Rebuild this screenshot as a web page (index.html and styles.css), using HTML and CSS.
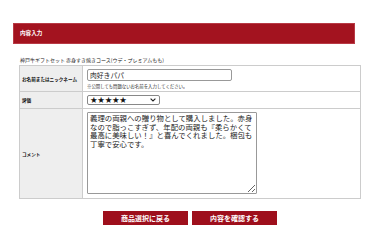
FILE: index.html
```html
<!DOCTYPE html>
<html lang="ja">
<head>
<meta charset="utf-8">
<link rel="stylesheet" href="styles.css">
</head>
<body>
<div class="header">内容入力</div>
<div class="title">神戸牛ギフトセット 赤身すき焼きコース(ウデ・プレミアムもも)</div>
<table class="form">
  <tr class="row-name">
    <th>お名前またはニックネーム</th>
    <td>
      <input class="name-input" type="text" value="肉好きパパ">
      <div class="note">※公開しても問題ないお名前を入力してください。</div>
    </td>
  </tr>
  <tr class="row-rating">
    <th>評価</th>
    <td>
      <div class="select"><span class="stars">★★★★★</span><svg class="chev" width="6" height="4" viewBox="0 0 6 4"><path d="M0.6 0.6 L3 3 L5.4 0.6" fill="none" stroke="#222" stroke-width="1.1"/></svg></div>
    </td>
  </tr>
  <tr class="row-comment">
    <th>コメント</th>
    <td>
      <textarea class="comment">義理の両親への贈り物として購入しました。赤身なので脂っこすぎず、年配の両親も『柔らかくて最高に美味しい！』と喜んでくれました。梱包も丁寧で安心です。</textarea>
    </td>
  </tr>
</table>
<div class="buttons">
  <div class="btn">商品選択に戻る</div>
  <div class="btn">内容を確認する</div>
</div>
</body>
</html>
```
FILE: styles.css
```css
body {
  margin: 0;
  background: #fff;
  font-family: "Noto Sans CJK JP", "DejaVu Sans", sans-serif;
  color: #222;
}
.header {
  margin: 23px 0 0 13px;
  width: 342px;
  height: 21px;
  box-sizing: border-box;
  background: #a3131f;
  border: 1px solid #b83a45;
  color: #fff;
  font-weight: bold;
  font-size: 5.6px;
  line-height: 19px;
  padding-left: 6px;
}
.title {
  margin: 13px 0 0 20px;
  font-size: 5px;
  line-height: 5px;
  color: #222;
}
.form {
  margin: 3px 0 0 19px;
  width: 342px;
  border-collapse: collapse;
  border: 1px solid #ccc;
}
.form th, .form td {
  border: 1px solid #ccc;
  padding: 0;
}
.form th {
  width: 60px;
  background: #eeeeee;
  text-align: left;
  padding-left: 2px;
  font-size: 4.6px;
  font-weight: bold;
  color: #111;
  vertical-align: middle;
}
.form td {
  padding-left: 4px;
  vertical-align: top;
}
.row-name td {
  height: 26px;
  padding-top: 3px;
  box-sizing: border-box;
}
.row-rating td {
  height: 17px;
  padding-top: 3px;
  box-sizing: border-box;
}
.row-comment td {
  height: 90px;
  padding-top: 3px;
  box-sizing: border-box;
}
.name-input {
  display: block;
  margin: 0;
  width: 145px;
  height: 12px;
  box-sizing: border-box;
  border: 1px solid #999;
  border-radius: 2px;
  padding: 0 2px;
  font-family: "Noto Sans CJK JP", sans-serif;
  font-size: 6.8px;
  color: #222;
  outline: none;
}
.note {
  font-size: 4.4px;
  line-height: 5px;
  margin-top: 3px;
  color: #333;
}
.select {
  display: flex;
  align-items: center;
  justify-content: space-between;
  width: 73px;
  height: 10px;
  box-sizing: border-box;
  border: 1px solid #888;
  border-radius: 2px;
  padding: 0 3px 0 2px;
}
.stars {
  font-family: "DejaVu Sans", sans-serif;
  font-size: 8.5px;
  line-height: 8px;
  letter-spacing: -0.3px;
  color: #111;
}
.chev {
  display: block;
}
.comment {
  display: block;
  margin: 0;
  width: 170px;
  height: 82px;
  box-sizing: border-box;
  border: 1px solid #999;
  border-radius: 1px;
  padding: 1px 2px;
  font-family: "Noto Sans CJK JP", sans-serif;
  font-size: 7.4px;
  line-height: 8.5px;
  color: #222;
  resize: vertical;
  outline: none;
}
.buttons {
  margin: 12px 0 0 19px;
  width: 342px;
  display: flex;
  justify-content: center;
  gap: 4px;
}
.btn {
  width: 85px;
  height: 14px;
  background: #9e0f1c;
  color: #fff;
  font-size: 7px;
  font-weight: bold;
  line-height: 14px;
  text-align: center;
}
```
